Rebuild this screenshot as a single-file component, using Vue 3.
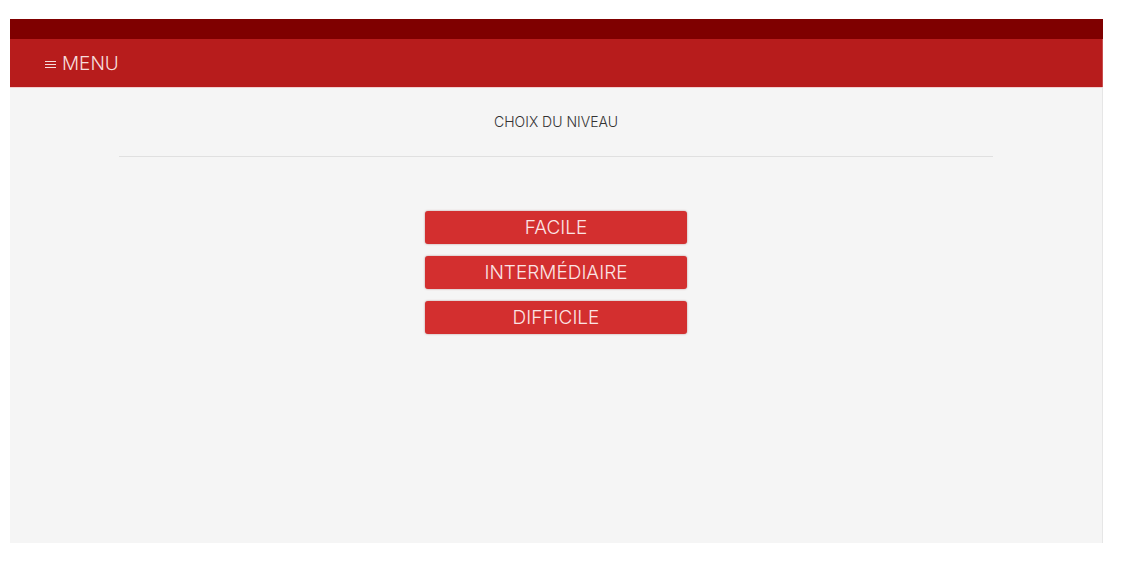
<script setup>
const levels = ['FACILE', 'INTERMÉDIAIRE', 'DIFFICILE']
</script>

<template>
  <div class="page">
    <header>
      <div class="status"></div>
      <nav class="bar">
        <button class="menu" type="button">
          <svg class="burger" viewBox="0 0 11 9" aria-hidden="true">
            <path d="M0 1.5H11M0 4.5H11M0 7.5H11" />
          </svg>
          <span>MENU</span>
        </button>
      </nav>
    </header>
    <main class="content">
      <h1 class="title">CHOIX DU NIVEAU</h1>
      <div class="levels">
        <button v-for="level in levels" :key="level" class="level" type="button">{{ level }}</button>
      </div>
    </main>
  </div>
</template>

<style>
body {
  background: #fff;
}
</style>

<style scoped>
.page {
  box-sizing: border-box;
  display: flex;
  flex-direction: column;
  min-height: 100vh;
  padding: 19px 20px 21px 10px;
  font-family: Inter, "Liberation Sans", sans-serif;
}
.status {
  height: 20px;
  background: #7f0000;
}
.bar {
  display: flex;
  align-items: center;
  height: 48px;
  padding: 0 35px;
  background: #b71c1c;
  border-right: 1px solid #c94d4d;
}
.menu {
  display: flex;
  align-items: center;
  gap: 6px;
  padding: 2px 0 0;
  border: 0;
  background: none;
  color: #f6dcdc;
  font: 300 19px/24px Inter, sans-serif;
  cursor: pointer;
}
.burger {
  width: 11px;
  height: 9px;
  fill: none;
  stroke: #f6dcdc;
  stroke-width: 1;
}
.content {
  flex: 1;
  padding: 0 10%;
  background: #f5f5f5;
  border-top: 1px solid #f3cfcf;
  border-right: 1px solid #e6e6e6;
}
.title {
  margin: 0;
  padding: 24px 0;
  border-bottom: 1px solid #e0e0e0;
  color: #333;
  font-size: 14px;
  font-weight: 300;
  line-height: 20px;
  text-align: center;
}
.levels {
  display: flex;
  flex-direction: column;
  gap: 12px;
  width: 30%;
  margin: 54px auto 0;
}
.level {
  height: 33px;
  padding: 1px 0 0;
  border: 0;
  border-radius: 3px;
  background: #d32f2f;
  box-shadow: 0 0 2px rgba(120, 30, 30, 0.5);
  color: #fbe4e4;
  font: 300 19px/32px Inter, sans-serif;
  cursor: pointer;
}
</style>
